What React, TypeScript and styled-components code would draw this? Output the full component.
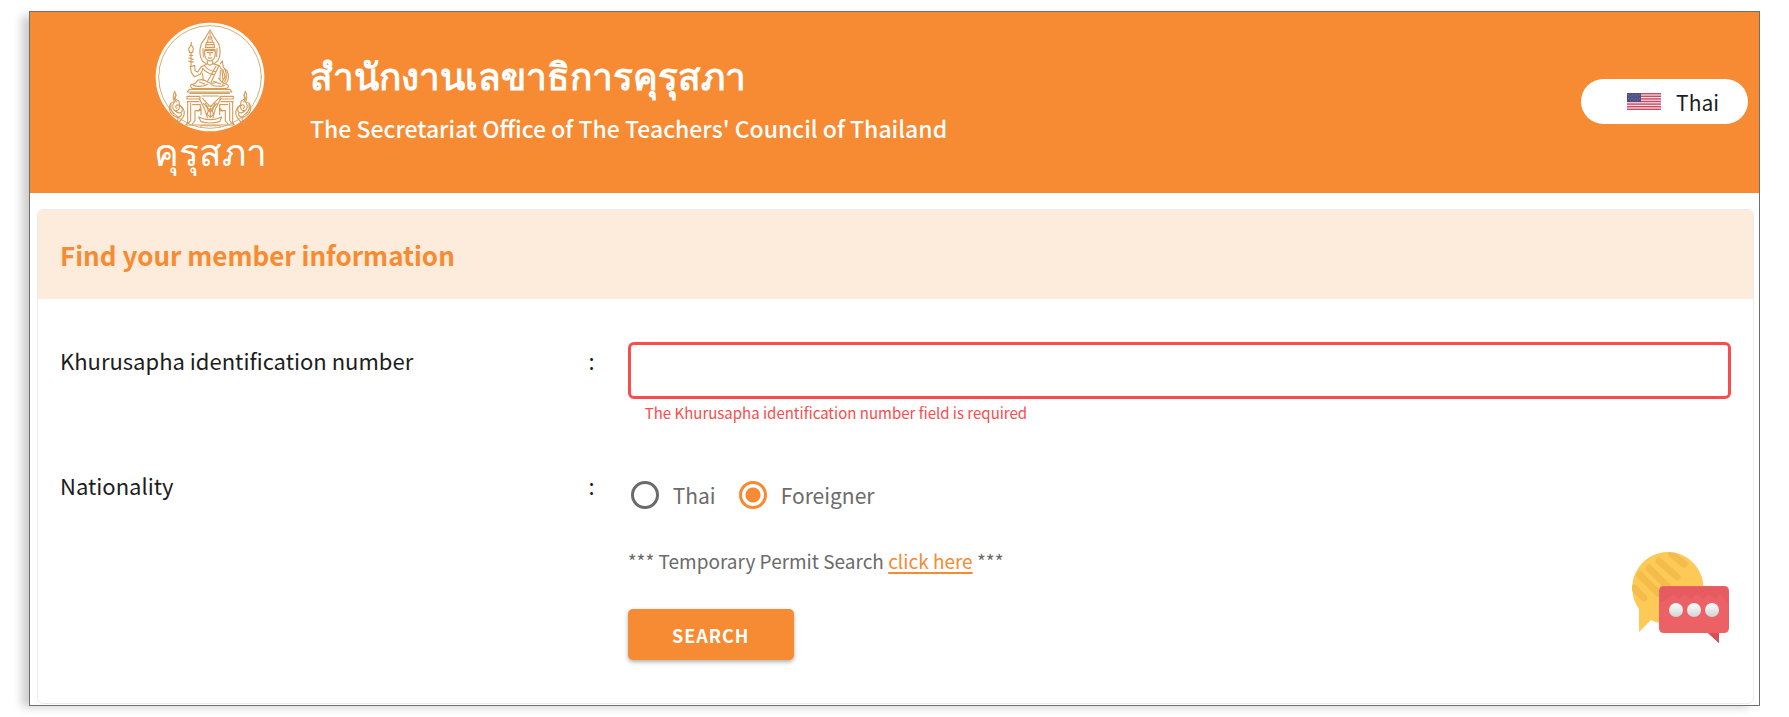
import React, { useState } from 'react';
import styled, { createGlobalStyle } from 'styled-components';

const orange = '#f68b33';
const red = '#fb4b4b';
const gold = '#d69c58';

const GlobalStyle = createGlobalStyle`
  * { box-sizing: border-box; }
  body {
    margin: 0;
    background: #fff;
    color: #1d1d1d;
    font-family: "Noto Sans CJK JP", "Noto Sans", sans-serif;
    font-size: 22px;
    line-height: 32px;
  }
`;

const Page = styled.div`
  padding: 11px 29px;
`;

const Frame = styled.div`
  border: 1px solid #6f6f6f;
  box-shadow: -9px 3px 9px -2px rgba(0, 0, 0, 0.2);
  background: #fff;
`;

const Header = styled.header`
  display: flex;
  align-items: center;
  min-height: 181px;
  padding: 0 11px 2px 124px;
  background: ${orange};
  color: #fff;
`;

const Brand = styled.div`
  display: flex;
  flex-direction: column;
  align-items: center;
  width: 112px;
  height: 160px;
`;

const BrandName = styled.span`
  font-family: serif;
  font-size: 37px;
  line-height: 44px;
  white-space: nowrap;
`;

const Titles = styled.div`
  flex: 1;
  padding: 0 0 8px 44px;
`;

const OfficeName = styled.h1`
  margin: 0;
  font-size: 37px;
  font-weight: 700;
  line-height: 60px;
`;

const OfficeNameEnglish = styled.p`
  margin: 0;
  font-size: 23px;
  font-weight: 500;
  line-height: 48px;
`;

const LanguageButton = styled.button`
  display: flex;
  align-items: center;
  justify-content: flex-end;
  gap: 15px;
  width: 167px;
  height: 45px;
  padding: 0 29px 0 0;
  border: 0;
  border-radius: 23px;
  background: #fff;
  color: #1d1d1d;
  font: inherit;
  font-size: 21px;
`;

const Main = styled.main`
  padding: 16px 5px 1px 7px;
`;

const Card = styled.section`
  border: 1px solid #ececec;
  border-radius: 6px;
  overflow: hidden;
`;

const CardHeader = styled.h2`
  margin: 0;
  padding: 25px 22px 24px;
  background: #fdebdb;
  color: ${orange};
  font-size: 26px;
  font-weight: 700;
  line-height: 40px;
`;

const Form = styled.form`
  display: flex;
  flex-direction: column;
  gap: 42px;
  padding: 43px 22px;
`;

const Row = styled.div`
  display: grid;
  grid-template-columns: 32% 1fr;
  column-gap: 33px;
`;

const RowLabel = styled.div`
  display: flex;
  justify-content: space-between;
  align-items: flex-start;
  padding-top: 2px;
`;

const TextInput = styled.input`
  display: block;
  width: 100%;
  height: 57px;
  padding: 0 16px;
  border: 3px solid ${red};
  border-radius: 6px;
  outline: 0;
  background: #fff;
  font: inherit;
`;

const ErrorText = styled.p`
  margin: 0;
  padding: 2px 17px 0;
  color: ${red};
  font-size: 15px;
  line-height: 24px;
`;

const Options = styled.div`
  display: flex;
  gap: 23px;
  padding: 12px 3px 0;
`;

const Option = styled.label`
  display: flex;
  align-items: center;
  gap: 14px;
  color: #6b6b6b;
  font-size: 21px;
`;

const Radio = styled.input`
  appearance: none;
  width: 28px;
  height: 28px;
  margin: 0;
  border: 3px solid #6b6b6b;
  border-radius: 50%;

  &:checked {
    border-color: ${orange};
    background: radial-gradient(circle, ${orange} 7px, transparent 8px);
  }
`;

const Note = styled.p`
  margin: 36px 0 34px;
  color: #6b6b6b;
  font-size: 19px;
  line-height: 28px;

  a { color: ${orange}; text-underline-offset: 3px; text-decoration-thickness: 2px; }
`;

const SearchButton = styled.button`
  display: block;
  width: 166px;
  height: 51px;
  border: 0;
  border-radius: 5px;
  background: ${orange};
  box-shadow: 0 2px 4px rgba(0, 0, 0, 0.32);
  color: #fff;
  font: inherit;
  font-size: 18px;
  font-weight: 700;
  letter-spacing: 1px;
`;

const ChatButton = styled.button`
  position: fixed;
  right: 59px;
  bottom: 73px;
  width: 98px;
  height: 92px;
  padding: 0;
  border: 0;
  background: none;
`;

function FlameOrnament() {
  return (
    <g>
      <path d="M104 246 L108 257 L105 268 L117 276 L118 287 Q137 300 132 317 Q123 338 105 345 Q119 329 112 324 Q89 317 88 297 Q88 278 103 278 Q96 263 104 246" />
      <path d="M103 278 Q94 291 102 302 Q114 308 118 296 Q120 285 110 287 Q104 293 110 297 M102 302 Q119 317 126 306 Q130 294 118 287 M112 324 Q126 322 124 312 M108 257 Q100 268 109 278 M93 286 Q90 305 103 314" />
    </g>
  );
}

function Emblem() {
  return (
    <svg width="110" height="110" viewBox="45 38 330 330" aria-hidden="true">
      <circle cx="210" cy="203" r="163" fill="#fff" />
      <g fill="none" stroke={gold} strokeWidth="3.4" strokeLinejoin="round" strokeLinecap="round">
        <circle cx="210" cy="203" r="154" strokeWidth="2.6" />
        <path d="M210 62 L199 81 L184 103 Q174 134 187 155 L198 163 M210 62 L221 81 L236 103 Q246 134 233 155 L222 163" />
        <path d="M210 70 V92 M206 82 L202 99 H218 L214 82 M199 106 H221 M196 114 H224 L221 100 M196 114 L199 100 M195 120 Q191 142 201 151 Q210 159 219 151 Q229 142 225 120 Z" />
        <path d="M202 130 H207 M213 130 H218 M210 130 V139 M205 145 Q210 148 215 145 M189 118 L190 142 M231 118 L230 142 M196 124 H224" />
        <path d="M202 155 V163 L184 172 L173 188 L165 184 L164 169 M218 155 V163 L238 169 L246 183 L249 210 M202 163 Q210 172 218 163 M194 170 Q206 185 227 187 M188 177 Q200 193 222 195 M187 192 L190 213 M236 171 L213 219 M228 171 L202 217" />
        <path d="M164 169 L151 172 L154 190 L163 202 L181 195 L189 179 M153 169 V131 M148 129 H158 L160 117 L154 106 L146 118 Z M149 138 H158 M146 146 L160 150 M146 156 L161 158 M154 106 V99" />
        <path d="M241 163 L247 155 L250 174 L261 184 Q270 204 260 220 L248 225 M249 181 L255 203 L246 219 M241 183 L240 210 M253 177 Q265 199 254 217" />
        <path d="M173 213 Q165 226 153 226 Q150 235 160 238 H254 Q269 236 264 227 Q244 221 236 207 M173 213 Q190 207 204 219 Q215 225 230 219 M160 229 Q184 235 204 225 M213 226 Q230 234 253 229 M178 218 L194 224 M220 216 L242 224" />
        <path d="M148 240 H270 L276 248 H141 Z M150 252 H268 M141 261 H180 V269 H141 Z M240 261 H280 V269 H240 Z M142 277 H177 M243 277 H279 M186 260 H235 M187 267 L211 292 L236 267 M190 282 L211 303 L231 282" />
        <path d="M143 277 V340 L137 347 H283 L278 340 V277 M152 282 V334 L144 343 M158 286 H181 V304 H165 V334 L157 344 M269 282 V334 L277 343 M263 286 H239 V304 H256 V334 L264 344" />
        <path d="M177 267 L194 299 L202 325 M243 267 L226 299 L219 325 M196 281 L205 305 L201 315 L211 324 L220 315 L217 305 L225 281 M199 290 H223 M211 296 V319 M204 301 L211 308 L218 301 M174 305 L183 296 L183 317 M247 305 L239 296 L239 317" />
        <path d="M176 323 Q210 339 245 323 L239 337 Q210 345 183 337 Z" />
        <path d="M181 351 Q191 345 201 350 Q207 345 212 351 Q219 345 225 350 Q235 345 242 351" strokeWidth="2.6" />
        <FlameOrnament />
        <g transform="translate(420 0) scale(-1 1)">
          <FlameOrnament />
        </g>
      </g>
    </svg>
  );
}

function Flag() {
  const stripes = [0, 1, 2, 3, 4, 5, 6];
  return (
    <svg width="34" height="17" viewBox="0 0 34 17" aria-hidden="true">
      <rect width="34" height="17" fill="#f3e4e9" />
      {stripes.map((i) => (
        <rect key={i} y={i * 2.6} width="34" height="1.4" fill="#cc4a62" />
      ))}
      <rect width="14" height="9" fill="#4f4f86" />
      <g fill="#8d8db4">
        {stripes.map((i) => (
          <circle key={i} cx={1.6 + i * 1.8} cy={i % 2 ? 3 : 1.8} r="0.5" />
        ))}
        {stripes.map((i) => (
          <circle key={i} cx={1.6 + i * 1.8} cy={i % 2 ? 7 : 5.4} r="0.5" />
        ))}
      </g>
    </svg>
  );
}

function ChatIcon() {
  return (
    <svg width="98" height="92" viewBox="0 0 98 92" aria-hidden="true">
      <defs>
        <clipPath id="bubble">
          <circle cx="36" cy="36" r="36" />
        </clipPath>
        <linearGradient id="dot" x1="0" y1="0" x2="0" y2="1">
          <stop offset="0" stopColor="#fff" />
          <stop offset="1" stopColor="#d2d2d2" />
        </linearGradient>
      </defs>
      <path d="M36 0 A36 36 0 1 1 19 68 L7 80 V57 A36 36 0 0 1 36 0 Z" fill="#fdca57" />
      <g clipPath="url(#bubble)" stroke="#f3bc4b" strokeWidth="7" strokeLinecap="round">
        <path d="M2 36 L12 46 M8 23 L26 41 M17 16 L36 35 M27 9 L45 25 M40 2 L52 12" />
      </g>
      <path d="M32 34 H92 Q97 34 97 39 V76 Q97 81 92 81 H87 V91 L76 81 H32 Q27 81 27 76 V39 Q27 34 32 34 Z" fill="#eb6165" />
      <path d="M28 50 V39 Q28 35 32 35 H92 Q96 35 96 39 V50 L88 42 L83 47 L77 42 L71 47 L65 42 L59 47 L53 42 L47 47 L41 42 L35 47 Z" fill="#e3595e" opacity="0.7" />
      <path d="M76 81 H87 V91 Z" fill="#d94f56" />
      <g fill="url(#dot)">
        <circle cx="44" cy="58" r="7" />
        <circle cx="62" cy="58" r="7" />
        <circle cx="80" cy="58" r="7" />
      </g>
    </svg>
  );
}

export default function App() {
  const [nationality, setNationality] = useState('Foreigner');

  return (
    <Page>
      <GlobalStyle />
      <Frame>
        <Header>
          <Brand>
            <Emblem />
            <BrandName lang="th">คุรุสภา</BrandName>
          </Brand>
          <Titles>
            <OfficeName lang="th">สำนักงานเลขาธิการคุรุสภา</OfficeName>
            <OfficeNameEnglish>The Secretariat Office of The Teachers' Council of Thailand</OfficeNameEnglish>
          </Titles>
          <LanguageButton type="button">
            <Flag />
            Thai
          </LanguageButton>
        </Header>
        <Main>
          <Card>
            <CardHeader>Find your member information</CardHeader>
            <Form onSubmit={(event) => event.preventDefault()}>
              <Row>
                <RowLabel>
                  <label htmlFor="member-id">Khurusapha identification number</label>
                  <span>:</span>
                </RowLabel>
                <div>
                  <TextInput id="member-id" type="text" aria-invalid="true" aria-describedby="member-id-error" />
                  <ErrorText id="member-id-error">The Khurusapha identification number field is required</ErrorText>
                </div>
              </Row>
              <Row role="radiogroup" aria-labelledby="nationality-label">
                <RowLabel>
                  <span id="nationality-label">Nationality</span>
                  <span>:</span>
                </RowLabel>
                <div>
                  <Options>
                    {['Thai', 'Foreigner'].map((name) => (
                      <Option key={name}>
                        <Radio
                          type="radio"
                          name="nationality"
                          value={name}
                          checked={nationality === name}
                          onChange={() => setNationality(name)}
                        />
                        {name}
                      </Option>
                    ))}
                  </Options>
                  <Note>
                    *** Temporary Permit Search <a href="#temporary-permit">click here</a> ***
                  </Note>
                  <SearchButton type="submit">SEARCH</SearchButton>
                </div>
              </Row>
            </Form>
          </Card>
        </Main>
      </Frame>
      <ChatButton type="button" aria-label="Chat">
        <ChatIcon />
      </ChatButton>
    </Page>
  );
}
